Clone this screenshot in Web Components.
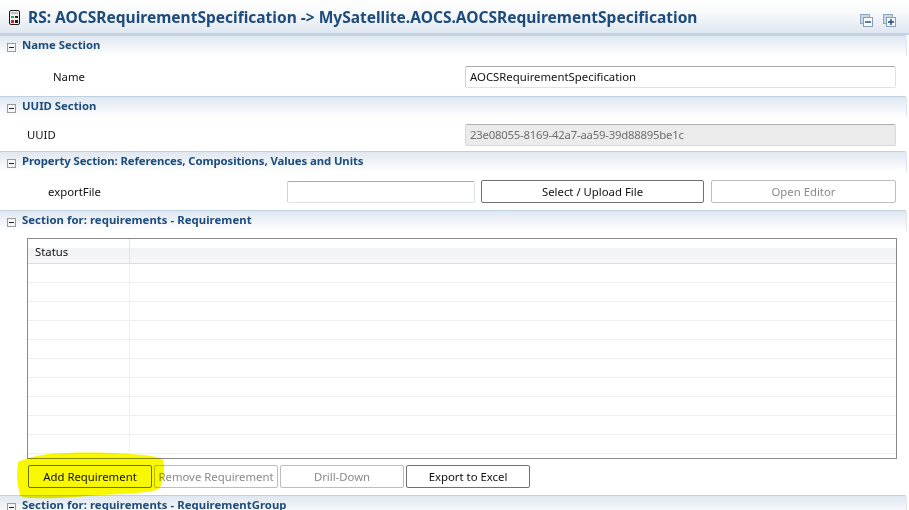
<!DOCTYPE html>
<html><head><meta charset="utf-8"><style>
html,body{margin:0;padding:0;background:#fff}
body{width:909px;height:510px;overflow:hidden;position:relative;font:11.35px "Noto Sans","Open Sans",sans-serif;color:#111}
x-form{display:block}
</style></head><body>
<x-form>
<x-title>RS: AOCSRequirementSpecification -&gt; MySatellite.AOCS.AOCSRequirementSpecification</x-title>
<x-section label="Name Section" h="61">
 <x-row cols="465px 431px" top="10"><x-label indent="53">Name</x-label><x-field value="AOCSRequirementSpecification"></x-field></x-row>
</x-section>
<x-section label="UUID Section" h="55">
 <x-row cols="465px 431px" top="7"><x-label indent="27">UUID</x-label><x-field disabled style="letter-spacing:-.22px" value="23e08055-8169-42a7-aa59-39d88895be1c"></x-field></x-row>
</x-section>
<x-section label="Property Section: References, Compositions, Values and Units" ls="-.09" h="59">
 <x-row cols="281px 188px 224px 185px" gap="6" top="8"><x-label indent="48">exportFile</x-label><x-field></x-field><x-btn style="margin-right:1px">Select / Upload File</x-btn><x-btn disabled>Open Editor</x-btn></x-row>
</x-section>
<x-section label="Section for: requirements - Requirement" ls=".05" h="285">
 <x-table></x-table>
 <x-buttons><x-btn>Add Requirement</x-btn><x-btn disabled>Remove Requirement</x-btn><x-btn disabled>Drill-Down</x-btn><x-btn>Export to Excel</x-btn></x-buttons>
</x-section>
<x-section label="Section for: requirements - RequirementGroup" ls=".05" h="15"></x-section>
</x-form>
<x-highlight></x-highlight>
<script>
function def(name,css,html,init){
  customElements.define(name,class extends HTMLElement{
    connectedCallback(){
      if(this.shadowRoot)return;
      const r=this.attachShadow({mode:'open'});
      r.innerHTML='<style>'+css+'</style>'+(typeof html==='function'?html(this):html);
      if(init)init(this,r);
    }
  });
}
def('x-title',`:host{display:flex;align-items:center;height:35px;box-sizing:border-box;padding:0 12px 0 9px;background:linear-gradient(#fff 0,#f7f9fb 40%,#dfe7f0 100%);border-bottom:2px solid #c2d3e3;color:#1c4b7c;font:700 15.53px "Noto Sans",sans-serif;white-space:nowrap}
svg{flex:none;display:block}
.logo{margin-top:2px}
.t{flex:1;margin-left:8px}
.tools{display:flex;gap:10px;margin-top:7px;margin-right:1px}`,
`<svg class="logo" width="11" height="15" viewBox="0 0 11 15"><rect x=".5" y=".5" width="10" height="14" rx="1.5" fill="#f2f2f2" stroke="#1a1a1a"/><rect x="2" y="2" width="7" height="2" fill="#bdbdbd"/><rect x="2" y="6" width="3" height="2" fill="#2aa84a"/><rect x="6" y="6" width="3" height="2" fill="#222"/><rect x="2" y="10" width="3" height="3" fill="#dc1c1c"/><rect x="6" y="10" width="3" height="3" fill="#222"/></svg>
<span class="t"><slot></slot></span>
<span class="tools">
<svg width="13" height="13" viewBox="0 0 13 13"><rect x=".5" y=".5" width="9" height="9" fill="#c9d9e9" stroke="#8ea6c2"/><rect x="3.5" y="3.5" width="9" height="9" fill="#f7fafd" stroke="#8c9db8"/><path d="M5 8h6" stroke="#0f4a86" stroke-width="1.4"/></svg>
<svg width="13" height="13" viewBox="0 0 13 13"><rect x=".5" y=".5" width="9" height="9" fill="#c9d9e9" stroke="#8ea6c2"/><rect x="3.5" y="3.5" width="9" height="9" fill="#f7fafd" stroke="#8c9db8"/><path d="M5 8h6M8 5v6" stroke="#0f4a86" stroke-width="1.4"/></svg>
</span>`);
def('x-section',`:host{display:block;box-sizing:border-box;overflow:hidden;position:relative}
.head{height:21px;margin-right:2px;display:flex;align-items:center;padding-left:7px;gap:6px;color:#1c4b7c;font:700 11.35px "Noto Sans",sans-serif;background:linear-gradient(#dfe7f0,#fff);border-radius:0 3px 0 0;border-top:1px solid #bfd0e0;border-right:1px solid #dfe7f0;white-space:nowrap;box-sizing:border-box}
svg{flex:none;display:block;margin-top:3px}
.l{margin-top:-3px}`,
h=>`<div class="head"><svg width="9" height="9" viewBox="0 0 9 9"><rect x=".5" y=".5" width="8" height="8" fill="#f5f6f8" stroke="#9a9a9a"/><path d="M2 4.5h5" stroke="#222"/></svg><span class="l" style="letter-spacing:${h.getAttribute('ls')||0}px">${h.getAttribute('label')}</span></div><slot></slot>`,
h=>{h.style.height=h.getAttribute('h')+'px'});
def('x-row',`:host{display:grid;align-items:center}`,`<slot></slot>`,h=>{
 h.style.gridTemplateColumns=h.getAttribute('cols');
 h.style.columnGap=(h.getAttribute('gap')||0)+'px';
 h.style.marginTop=(h.getAttribute('top')||9)+'px';
});
def('x-label',`:host{display:block;color:#111;margin-top:-1px}`,`<slot></slot>`,h=>{h.style.paddingLeft=h.getAttribute('indent')+'px'});
def('x-field',`:host{display:block;box-sizing:border-box;height:22px;line-height:19px;padding:0 4px;border:1px solid #dfe3e8;border-top-color:#a9a9a9;border-left-color:#cfcfd4;border-radius:2px;background:#fff;white-space:nowrap;overflow:hidden;color:#111}
:host([disabled]){background:#ebebeb;color:#6d6d6d;border-color:#d8d8d8;border-top-color:#b0b0b0}`,
h=>`${h.getAttribute('value')||''}`);
def('x-btn',`:host{display:flex;align-items:center;justify-content:center;box-sizing:border-box;height:23px;background:#fff;border:1px solid #707070;border-radius:2px;white-space:nowrap;color:#111;overflow:hidden}
:host([disabled]){border-color:#bdbdbd;color:#8a8a8a}`,`<slot></slot>`);
def('x-buttons',`:host{display:grid;grid-template-columns:124px 124px 124px 124px;column-gap:2px;margin:6px 0 0 28px}`,`<slot></slot>`);
def('x-table',`:host{display:block;box-sizing:border-box;height:221px;margin:7px 12px 0 27px;border:1px solid #8a8a8a;overflow:hidden;background:#fff}
.h{display:grid;grid-template-columns:102px 1fr;height:25px;background:linear-gradient(#fff 0 35%,#f2f3f5 40%,#f7f7f9);border-bottom:1px solid #dcdcdc;box-sizing:border-box}
.h span{border-right:1px solid #e3e3e3;padding:0 0 0 7px;line-height:25px;color:#111}
.h span+span{border-right:0}
.r{display:grid;grid-template-columns:102px 1fr;height:19px;border-bottom:1px solid #efefef;box-sizing:border-box}
.r i{border-right:1px solid #efefef}.r i+i{border-right:0}`,
`<div class="h"><span>Status</span><span></span></div>`+'<div class="r"><i></i><i></i></div>'.repeat(10));
def('x-highlight',`:host{position:absolute;left:0;top:0;width:909px;height:510px;pointer-events:none;mix-blend-mode:multiply}
svg{display:block}`,
`<svg width="909" height="510" viewBox="0 0 909 510"><path d="M18 462C30 456 50 453 67 453C90 452 115 453 130 454C145 455 158 456 163 460C165 468 164 472 163 477C162 484 160 488 157 490C140 494 120 494 100 495C75 497 50 499 33 498C25 498 21 497 20 495C18 487 17 480 17 473Z" fill="#f8f800"/></svg>`);
</script>
</body></html>
